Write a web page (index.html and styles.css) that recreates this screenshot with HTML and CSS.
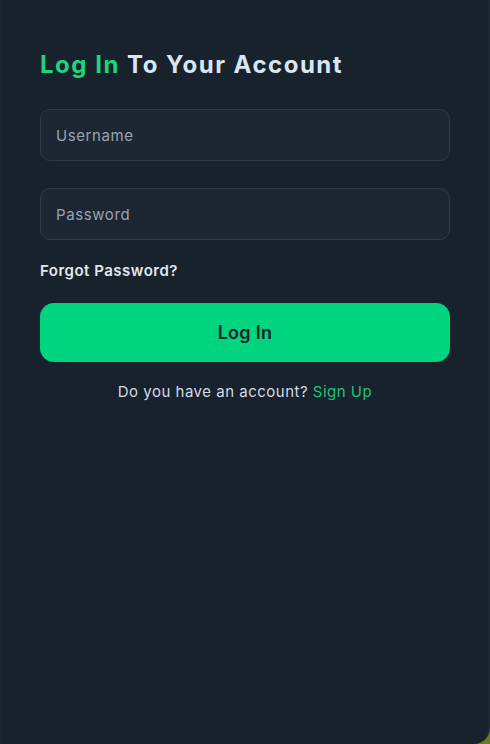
FILE: index.html
```
<!DOCTYPE html>
<html lang="en">
<head>
<meta charset="utf-8">
<title>Log In</title>
<link rel="stylesheet" href="styles.css">
</head>
<body>
<div class="card">
  <h1 class="title"><span class="accent">Log In</span> To Your Account</h1>
  <form class="form">
    <div class="field"><span class="placeholder">Username</span></div>
    <div class="field"><span class="placeholder">Password</span></div>
    <a class="forgot">Forgot Password?</a>
    <button class="btn" type="button">Log In</button>
    <p class="signup">Do you have an account? <a class="link">Sign Up</a></p>
  </form>
</div>
</body>
</html>
```
FILE: styles.css
```
html, body {
  margin: 0;
  padding: 0;
  height: 100%;
}
body {
  background: #6a7b22;
  font-family: Inter, "Noto Sans", sans-serif;
}
.card {
  box-sizing: border-box;
  height: 744px;
  width: 490px;
  background: #18222d;
  border-right: 2px solid #1e2833;
  border-left: 1px solid #1c2631;
  border-bottom-right-radius: 16px;
  padding: 50px 38px 0 39px;
}
.title {
  margin: 0 0 29px;
  font-size: 24px;
  font-weight: 700;
  color: #d9e5f2;
  letter-spacing: 1.5px;
  line-height: 30px;
}
.accent { color: #1ed47f; }
.form {
  display: flex;
  flex-direction: column;
}
.field {
  box-sizing: border-box;
  height: 52px;
  background: #1d2733;
  border: 1px solid #2f3a47;
  border-radius: 10px;
  display: flex;
  align-items: center;
  padding: 0 15px;
  margin-bottom: 27px;
}
.placeholder {
  color: #98a3b3;
  font-size: 15px;
  letter-spacing: 0.6px;
}
.forgot {
  color: #e3e8ee;
  font-size: 15px;
  font-weight: 600;
  margin-top: -6px;
  line-height: 20px;
  letter-spacing: 0.5px;
}
.btn {
  margin-top: 22px;
  height: 59px;
  border: none;
  border-radius: 14px;
  background: #00d47e;
  color: #17202a;
  font-family: inherit;
  font-size: 18px;
  font-weight: 600;
  letter-spacing: 0.3px;
}
.signup {
  margin: 20px 0 0;
  text-align: center;
  color: #d3dae3;
  font-size: 15px;
  line-height: 20px;
  letter-spacing: 0.5px;
}
.link { color: #1ec47a; }
```
